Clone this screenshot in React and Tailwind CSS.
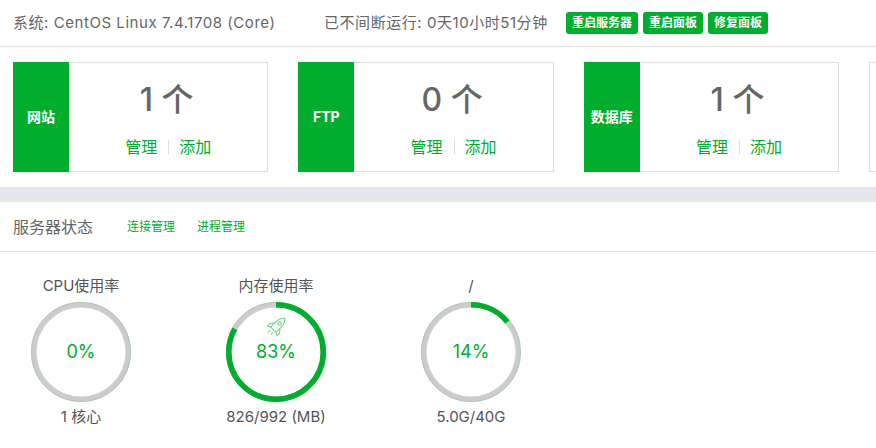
const FONT = "font-['Inter','Noto_Sans_CJK_SC',sans-serif]";

const cards = [
  { label: "网站", count: "1 个" },
  { label: "FTP", count: "0 个" },
  { label: "数据库", count: "1 个" },
];

const gauges = [
  { title: "CPU使用率", pct: 0, foot: "1 核心" },
  { title: "内存使用率", pct: 83, foot: "826/992 (MB)", rocket: true },
  { title: "/", pct: 14, foot: "5.0G/40G" },
];

function Card({ label, count }) {
  return (
    <div className="flex w-[255.4px] h-[110px] shrink-0 border border-[#ddd]">
      <div className="-m-px mr-0 w-[56px] shrink-0 bg-[#00ad2d] flex items-center justify-center text-white text-sm font-bold">
        {label}
      </div>
      <div className="flex-1 flex flex-col items-center pt-[4px]">
        <div className="text-[32px] leading-[66px] text-[#666] font-medium pr-[3px]">{count}</div>
        <div className="flex items-center text-[16px] leading-[20px] mt-[4px] text-[#00ad2d]">
          <span>管理</span>
          <span className="w-px h-[14px] bg-[#ddd] ml-[11px] mr-[10px]"></span>
          <span>添加</span>
        </div>
      </div>
    </div>
  );
}

function Rocket() {
  return (
    <svg width="21" height="21" viewBox="0 0 20 20" fill="none" stroke="#00ad2d" strokeWidth="0.9" strokeLinecap="round" strokeLinejoin="round" className="absolute top-[15px] left-[39px] opacity-60">
      <g transform="rotate(45 10 10)">
        <path d="M10 -2.500c2.600 2.400 3.600 5.200 3.600 8.200v7.300h-7.200V5.700c0-3 1-5.800 3.600-8.200z" />
        <circle cx="10" cy="4.500" r="1.600" />
        <path d="M6.400 7.500L3.500 11v3.500l2.900-1.500" />
        <path d="M13.600 7.500l2.900 3.500v3.500l-2.900-1.500" />
        <path d="M8.500 15.500v3M11.500 15.500v2" />
      </g>
    </svg>
  );
}

function Gauge({ title, pct, foot, rocket }) {
  const r = 47.25;
  const c = 2 * Math.PI * r;
  return (
    <div className="w-[100px] flex flex-col items-center shrink-0">
      <div className="whitespace-nowrap text-[15px] leading-[20px] text-[#555]">{title}</div>
      <div className="relative w-[100px] h-[100px] mt-[6px]">
        <svg width="100" height="100" viewBox="0 0 100 100" className="-rotate-90">
          <circle cx="50" cy="50" r={r} fill="none" stroke="#ccc" strokeWidth="5.5" />
          <circle cx="50" cy="50" r="49.75" fill="none" stroke="#00ad2d" strokeWidth="0.5" opacity="0.35" />
          <circle cx="50" cy="50" r={r} fill="none" stroke="#00ad2d" strokeWidth="5.5" strokeDasharray={`${(c * pct) / 100} ${c}`} />
        </svg>
        {rocket && <Rocket />}
        <div className="absolute inset-0 flex items-center justify-center text-[18px] text-[#00ad2d] pb-[2px]">{pct}%</div>
      </div>
      <div className="whitespace-nowrap text-[15px] leading-[20px] text-[#555] mt-[5px]">{foot}</div>
    </div>
  );
}

export default function App() {
  return (
    <div className={`${FONT} w-[876px] h-[448px] overflow-hidden bg-white`}>
      {/* top bar */}
      <div className="h-[47px] border-b border-[#ddd] flex items-start pl-[13px] pt-[12px] text-[15px] leading-[22px] text-[#666] whitespace-nowrap">
        <span className="w-[311px] tracking-[0.55px]">系统: CentOS Linux 7.4.1708 (Core)</span>
        <span className="w-[242px] tracking-[0.55px]">已不间断运行: 0天10小时51分钟</span>
        <div className="flex gap-[5px]">
          <button className="h-[22px] w-[72px] rounded-[3px] bg-[#00ad2d] text-white text-xs font-bold">重启服务器</button>
          <button className="h-[22px] w-[60px] rounded-[3px] bg-[#00ad2d] text-white text-xs font-bold">重启面板</button>
          <button className="h-[22px] w-[60px] rounded-[3px] bg-[#00ad2d] text-white text-xs font-bold">修复面板</button>
        </div>
      </div>

      {/* overview cards */}
      <div className="flex gap-[30px] pl-[13px] pt-[15px] pb-[15px]">
        {cards.map((card) => (
          <Card key={card.label} {...card} />
        ))}
        <div className="w-[255.4px] h-[110px] shrink-0 border border-[#ddd]"></div>
      </div>

      <div className="h-[15px] bg-[#e4e7ec]"></div>

      {/* server status */}
      <div className="h-[50px] border-b border-[#ddd] flex items-center pl-[13px] whitespace-nowrap">
        <span className="text-[16px] text-[#666] w-[114px]">服务器状态</span>
        <span className="text-xs text-[#00ad2d] w-[70px]">连接管理</span>
        <span className="text-xs text-[#00ad2d]">进程管理</span>
      </div>

      <div className="flex gap-[95px] pl-[31px] pt-[24px]">
        {gauges.map((g) => (
          <Gauge key={g.title} {...g} />
        ))}
      </div>
    </div>
  );
}
